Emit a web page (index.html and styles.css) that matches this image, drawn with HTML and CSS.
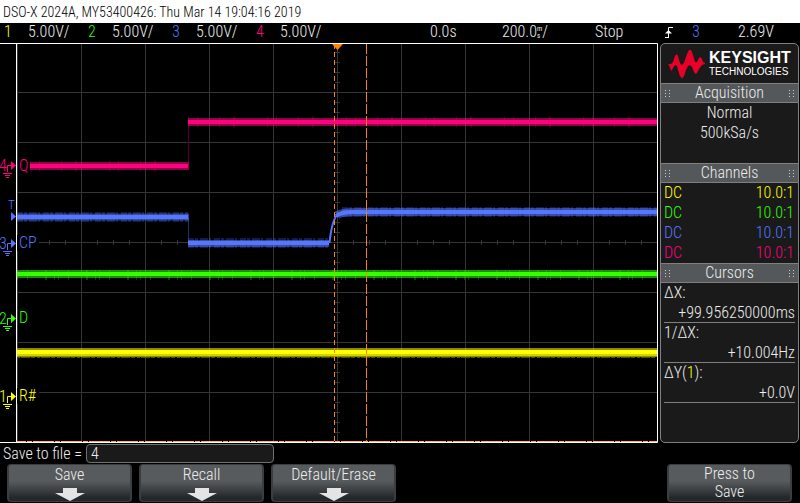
FILE: index.html
```html
<!DOCTYPE html>
<html lang="en">
<head>
<meta charset="utf-8">
<title>DSO-X 2024A</title>
<link rel="stylesheet" href="styles.css">
</head>
<body>
<header class="title">DSO-X 2024A, MY53400426: Thu Mar 14 19:04:16 2019</header>
<div class="status">
  <div class="channel"><span class="ch1">1</span><span>5.00V/</span></div>
  <div class="channel"><span class="ch2">2</span><span>5.00V/</span></div>
  <div class="channel"><span class="ch3">3</span><span>5.00V/</span></div>
  <div class="channel"><span class="ch4">4</span><span>5.00V/</span></div>
  <span class="delay">0.0s</span>
  <span class="timebase">200.0<span class="unit"><span>m</span><span>s</span></span>/</span>
  <span class="run">Stop</span>
  <div class="trigger">
    <svg width="8" height="11" viewBox="0 0 8 11" aria-hidden="true"><path d="M0 10.500h4M3.500 10V.5H8" fill="none" stroke="#fff"/><path d="M0 6.500h7L3.500 3z" fill="#fff"/></svg>
    <span class="ch3">3</span><span class="level">2.69V</span>
  </div>
</div>
<main class="main">
  <svg class="plot" viewBox="0 43 658 400" role="img" aria-label="Waveforms">
    <defs>
      <pattern id="grid" x="17" y="42" width="64" height="50" patternUnits="userSpaceOnUse"><path d="M0 .5h64M.5 0v50" stroke="#363636" fill="none"/></pattern>
      <g id="ground" fill="none" stroke="currentColor"><path d="M7.500 7V.5H11M3 8.500h9M5 10.500h5M6 12.500h3"/><path d="M11-4l5 4.500L11 5z" fill="currentColor" stroke="none"/></g>
    </defs>
    <rect x="17" y="44" width="640" height="397" fill="url(#grid)"/>
    <path class="ticks" d="M49 242.500H657" stroke-dasharray="1 15"/>
    <path class="ticks" d="M337.500 52V441" stroke-dasharray="1 9"/>
    <path d="M17 235h22v16H17zM17 388h22v16H17z"/>

    <g class="ch4">
      <path d="M188.500 124V164" stroke="#50002b"/>
      <path class="noise" d="M30 166H188M188 122H657" stroke-width="11" stroke-dasharray="1 8 1 21 1 13 2 32"/>
      <path class="band" d="M30 166H189M188 122H657" stroke-width="8"/>
      <path class="core" d="M30 166H188M188 122H657" stroke-width="4"/>
    </g>
    <g class="ch3">
      <path d="M188.500 218V242" stroke="#223266"/>
      <path class="noise" d="M17 217H188M188 243H329M342 212H657" stroke-width="10" stroke-dasharray="6 1 3 2 8 1 2 3"/>
      <path class="band" d="M17 217H189M188 243.500H329" stroke-width="7"/>
      <path class="band" d="M337 215C342 212 350 212 360 212H657" stroke-width="8"/>
      <path class="core" d="M17 217H188M188 243H329M336 216C341 212 347 212 353 212H657" stroke-width="4"/>
      <path class="core" d="M329.500 243C331 228 333 220 337 215" stroke-width="2"/>
    </g>
    <g class="ch2">
      <path class="noise" d="M17 275H657" stroke-width="10" stroke-dasharray="1 9 1 17 2 7 1 3"/>
      <path class="band" d="M17 274H657" stroke-width="8"/>
      <path class="core" d="M17 274H657" stroke-width="4"/>
    </g>
    <g class="ch1">
      <path class="band" d="M17 352.500H657" stroke-width="9"/>
      <path class="bright" d="M17 353H657" stroke-width="6"/>
      <path class="core" d="M17 352H657" stroke-width="4"/>
      <path class="dots" d="M17 357.500H657" stroke-dasharray="3 1 9 1 4 2"/>
    </g>

    <path class="cursor" d="M334.500 44V441" stroke-dasharray="5 3"/>
    <path class="cursor" d="M366.500 44V441" stroke-dasharray="10 2"/>
    <path d="M332 44h11l-5.500 6z" fill="#ff8500"/>
    <path d="M17 441.500H657" stroke="#ffb45a" stroke-dasharray="9 1 5 1 12 0"/>
    <path d="M0 43.500H657.500V442.500H0M16.500 43V443" fill="none" stroke="#fff"/>

    <g class="ch4"><text x="-1" y="171">4</text><use href="#ground" y="165"/><text x="19" y="171">Q</text></g>
    <g class="ch3"><text class="small" x="8" y="209">T</text><path d="M11 212l5 4.500-5 4.500z" fill="currentColor"/></g>
    <g class="ch3"><text x="-1" y="249">3</text><use href="#ground" y="243"/><text x="19" y="248">CP</text></g>
    <g class="ch2"><text x="-1" y="324">2</text><use href="#ground" y="318"/><text x="19" y="323">D</text></g>
    <g class="ch1"><text x="-1" y="402">1</text><use href="#ground" y="396"/><text x="19" y="401">R#</text></g>
  </svg>

  <aside class="panel">
    <div class="brand">
      <svg width="37" height="30" viewBox="668 48 37 30" aria-hidden="true"><path fill="#e90029" d="M668 63L671 63L673 61L675 55L676.500 53L678 55L680 62L681.500 64L684 62L687 53L689 49L691 49L693 54L695 61L697 61L699 57L700.500 56L702 58L703 61L705 62V63L702 64L699 68L697 72L695.500 73L694 71L692 66L690 64L688 65L686 69L684 75L682 77.500L680 75L678 69L677 65L675 64L673 67L671.500 70L670 67L669 64Z"/></svg>
      <div><div class="name">KEYSIGHT</div><div class="sub">TECHNOLOGIES</div></div>
    </div>
    <h2><i class="grip"></i>Acquisition<i class="grip"></i></h2>
    <div class="acquisition"><div>Normal</div><div>500kSa/s</div></div>
    <h2><i class="grip"></i>Channels<i class="grip"></i></h2>
    <table>
      <tr class="ch1"><td>DC</td><td>10.0:1</td></tr>
      <tr class="ch2"><td>DC</td><td>10.0:1</td></tr>
      <tr class="ch3"><td>DC</td><td>10.0:1</td></tr>
      <tr class="ch4"><td>DC</td><td>10.0:1</td></tr>
    </table>
    <h2><i class="grip"></i>Cursors<i class="grip"></i></h2>
    <dl>
      <div><dt>ΔX:</dt><dd>+99.956250000ms</dd></div>
      <div><dt>1/ΔX:</dt><dd>+10.004Hz</dd></div>
      <div><dt>ΔY(<span class="ch1">1</span>):</dt><dd>+0.0V</dd></div>
    </dl>
  </aside>
</main>
<div class="prompt"><label for="file">Save to file =</label><input id="file" type="text" value="4"></div>
<footer class="softkeys">
  <button type="button">Save<svg width="30" height="13" viewBox="0 0 30 13" aria-hidden="true"><path d="M8 0h14v5h8L15 13 0 5h8z"/></svg></button>
  <button type="button">Recall<svg width="30" height="13" viewBox="0 0 30 13" aria-hidden="true"><path d="M8 0h14v5h8L15 13 0 5h8z"/></svg></button>
  <button type="button">Default/Erase<svg width="30" height="13" viewBox="0 0 30 13" aria-hidden="true"><path d="M8 0h14v5h8L15 13 0 5h8z"/></svg></button>
  <button type="button" class="last">Press to<br>Save</button>
</footer>
</body>
</html>
```
FILE: styles.css
```css
* { box-sizing: border-box; }
body {
  margin: 0;
  background: #000;
  color: #eee;
  font: 300 16px/20px "Roboto Condensed", "Liberation Sans Narrow", "Liberation Sans", sans-serif;
}
.ch1 { color: #ffff00; }
.ch2 { color: #33ff00; }
.ch3 { color: #5577ff; }
.ch4 { color: #ff0080; }

.title {
  height: 23px;
  padding-left: 3px;
  background: #fff;
  color: #000;
  font-size: 14px;
  line-height: 24px;
  white-space: nowrap;
}
.status {
  display: grid;
  grid-template-columns: repeat(4, 84px) 162px 93px 70px 1fr;
  height: 20px;
  padding-left: 4px;
  line-height: 18px;
  white-space: nowrap;
}
.channel { display: grid; grid-template-columns: 24px 1fr; }
.delay { padding-left: 90px; }
.unit {
  display: inline-grid;
  font-size: 7px;
  font-weight: 400;
  line-height: 7px;
  vertical-align: 6px;
}
.trigger {
  display: grid;
  grid-template-columns: 27px 46px 1fr;
  align-items: center;
  height: 18px;
}

.main {
  display: grid;
  grid-template-columns: 1fr 139px;
  column-gap: 2px;
  padding-right: 1px;
}
.plot { display: block; width: 100%; }
.plot text { fill: currentColor; font-size: 16px; }
.plot .small { font-size: 13px; }
.ticks { stroke: #363636; stroke-width: 5; }
.noise, .band, .bright, .core { fill: none; stroke: currentColor; }
.noise { opacity: .25; }
.band { opacity: .55; }
.bright { opacity: .6; }
.dots { stroke: #555500; }
.cursor { stroke: #ff8500; }

.panel {
  border: 1px solid #808080;
  border-radius: 5px;
  background: #1a1a1a;
}
.brand {
  display: flex;
  align-items: center;
  gap: 4px;
  height: 39px;
  padding-left: 7px;
  color: #fff;
  font-family: "Liberation Sans", sans-serif;
}
.name { font-size: 16px; font-weight: bold; line-height: 16px; }
.sub { font-size: 10px; font-weight: normal; line-height: 11px; }
h2 {
  display: flex;
  justify-content: space-between;
  align-items: center;
  height: 20px;
  margin: 0;
  padding: 0 4px;
  border: solid #808080;
  border-width: 1px 0;
  background: #54585a;
  font-size: 16px;
  font-weight: 300;
  line-height: 18px;
}
.grip {
  width: 5px;
  height: 7px;
  background: repeating-linear-gradient(#54585a00 0 1px, #54585a 1px 3px), repeating-linear-gradient(90deg, #ccc 0 1px, #54585a 1px 4px);
}
.acquisition { height: 60px; text-align: center; }
table { width: 100%; border-collapse: collapse; }
td { height: 20px; padding: 0 4px 0 3px; }
td:last-child { text-align: right; }
dl { margin: 0; padding: 0 3px; }
dl div { border-bottom: 1px solid #808080; }
dt { line-height: 20px; }
dd { margin: 0; line-height: 19px; text-align: right; }

.prompt {
  display: flex;
  align-items: center;
  gap: 3px;
  height: 21px;
  padding-left: 3px;
}
.prompt label { width: 80px; white-space: nowrap; }
.prompt input {
  width: 188px;
  height: 19px;
  padding: 0 4px;
  border: 1px solid #707070;
  border-radius: 4px;
  background: #1a1a1a;
  color: inherit;
  font: inherit;
}
.softkeys {
  display: grid;
  grid-template-columns: repeat(6, 1fr);
  gap: 7px;
  padding: 0 8px 0 7px;
}
.softkeys button {
  height: 38px;
  padding: 0;
  border: 2px solid #3a3e40;
  border-width: 1px 2px;
  border-radius: 4px;
  background: linear-gradient(#575b5d 0 45%, #24282a 90%);
  color: inherit;
  font: inherit;
  line-height: 18px;
}
.softkeys svg { display: block; margin: 4px auto 0; fill: #e4e4e4; }
.softkeys .last { grid-column: 6; }
```
